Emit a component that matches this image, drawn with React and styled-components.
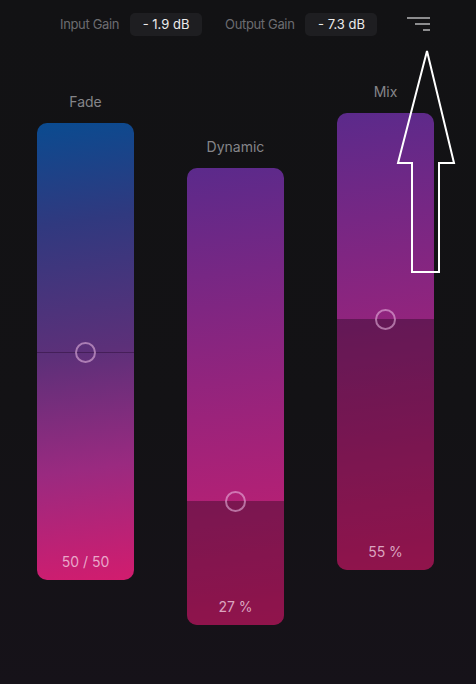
import React from "react";
import styled, { createGlobalStyle } from "styled-components";

const Global = createGlobalStyle`
  html, body { margin: 0; padding: 0; }
  body {
    width: 476px; height: 684px; overflow: hidden;
    background: linear-gradient(180deg, #121214 0%, #131215 60%, #161219 100%);
    font-family: Inter, "Noto Sans", sans-serif;
  }
`;

const Page = styled.div`
  position: relative;
  width: 476px;
  height: 684px;
`;

const Header = styled.div`
  display: flex;
  align-items: center;
  padding: 12px 0 0 60px;
  height: 24px;
`;

const GainLabel = styled.span`
  font-size: 13px;
  color: #6c6c70;
  margin-right: 11px;
  letter-spacing: -0.35px;
`;

const GainValue = styled.div`
  width: 72px;
  height: 23px;
  border-radius: 5px;
  background: #1e1e21;
  color: #ececec;
  font-size: 13px;
  font-weight: 400;
  display: flex;
  align-items: center;
  justify-content: center;
  margin-right: ${(p) => p.$mr}px;
`;

const MenuButton = styled.div`
  display: flex;
  flex-direction: column;
  align-items: flex-end;
  gap: 4px;
  width: 24px;
`;

const MenuLine = styled.div`
  height: 2px;
  width: ${(p) => p.$w}px;
  background: #8c8c8e;
`;

const Sliders = styled.div`
  display: flex;
  gap: 53px;
  padding-left: 37px;
`;

const Column = styled.div`
  display: flex;
  flex-direction: column;
  align-items: center;
  width: 97px;
  margin-top: ${(p) => p.$mt}px;
`;

const Label = styled.div`
  font-size: 14px;
  line-height: 17px;
  color: #858589;
  margin-bottom: 13px;
`;

const Track = styled.div`
  position: relative;
  width: 97px;
  height: 457px;
  border-radius: 10px;
  overflow: hidden;
  background: ${(p) =>
    p.$kind === "fade"
      ? "linear-gradient(172deg, #0a4b90 0%, #30397f 22%, #5c3079 50%, #9a2a80 75%, #d21c6e 100%)"
      : "linear-gradient(172deg, #5b2a8b 0%, #d21d6d 100%)"};
`;

const DarkFill = styled.div`
  position: absolute;
  left: 0;
  right: 0;
  bottom: 0;
  background: rgba(0, 0, 0, 0.31);
`;

const Divider = styled.div`
  position: absolute;
  left: 0;
  right: 0;
  height: 1px;
  background: rgba(40, 10, 50, 0.45);
`;

const Thumb = styled.div`
  position: absolute;
  left: 50%;
  width: 17px;
  height: 17px;
  margin-left: -10.5px;
  margin-top: -10px;
  border-radius: 50%;
  border: 2px solid rgba(236, 190, 230, 0.55);
`;

const Value = styled.div`
  position: absolute;
  left: 0;
  right: 0;
  bottom: 10px;
  text-align: center;
  font-size: 14px;
  color: rgba(245, 215, 230, 0.75);
`;

const ArrowOverlay = styled.svg`
  position: absolute;
  left: 390px;
  top: 45px;
  pointer-events: none;
`;

function Slider({ label, kind, pos, value, mt, dark }) {
  const pct = `${pos * 100}%`;
  return (
    <Column $mt={mt}>
      <Label>{label}</Label>
      <Track $kind={kind}>
        {dark && <DarkFill style={{ top: pct }} />}
        {!dark && <Divider style={{ top: pct }} />}
        <Thumb style={{ top: pct }} />
        <Value>{value}</Value>
      </Track>
    </Column>
  );
}

export default function App() {
  return (
    <Page>
      <Global />
      <Header>
        <GainLabel>Input Gain</GainLabel>
        <GainValue $mr={23}>- 1.9 dB</GainValue>
        <GainLabel>Output Gain</GainLabel>
        <GainValue $mr={29}>- 7.3 dB</GainValue>
        <MenuButton>
          <MenuLine $w={23} />
          <MenuLine $w={15} />
          <MenuLine $w={7} />
        </MenuButton>
      </Header>
      <Sliders>
        <Slider label="Fade" kind="fade" pos={0.5} value="50 / 50" mt={57} />
        <Slider label="Dynamic" kind="mix" pos={0.728} value="27 %" mt={102} dark />
        <Slider label="Mix" kind="mix" pos={0.45} value="55 %" mt={47} dark />
      </Sliders>
      <ArrowOverlay width="80" height="240" viewBox="0 0 80 240">
        <polygon
          points="37,6 64,118 49,118 49,227 22,227 22,118 8,118"
          fill="none"
          stroke="#ffffff"
          strokeWidth="2"
          strokeLinejoin="miter"
        />
      </ArrowOverlay>
    </Page>
  );
}
